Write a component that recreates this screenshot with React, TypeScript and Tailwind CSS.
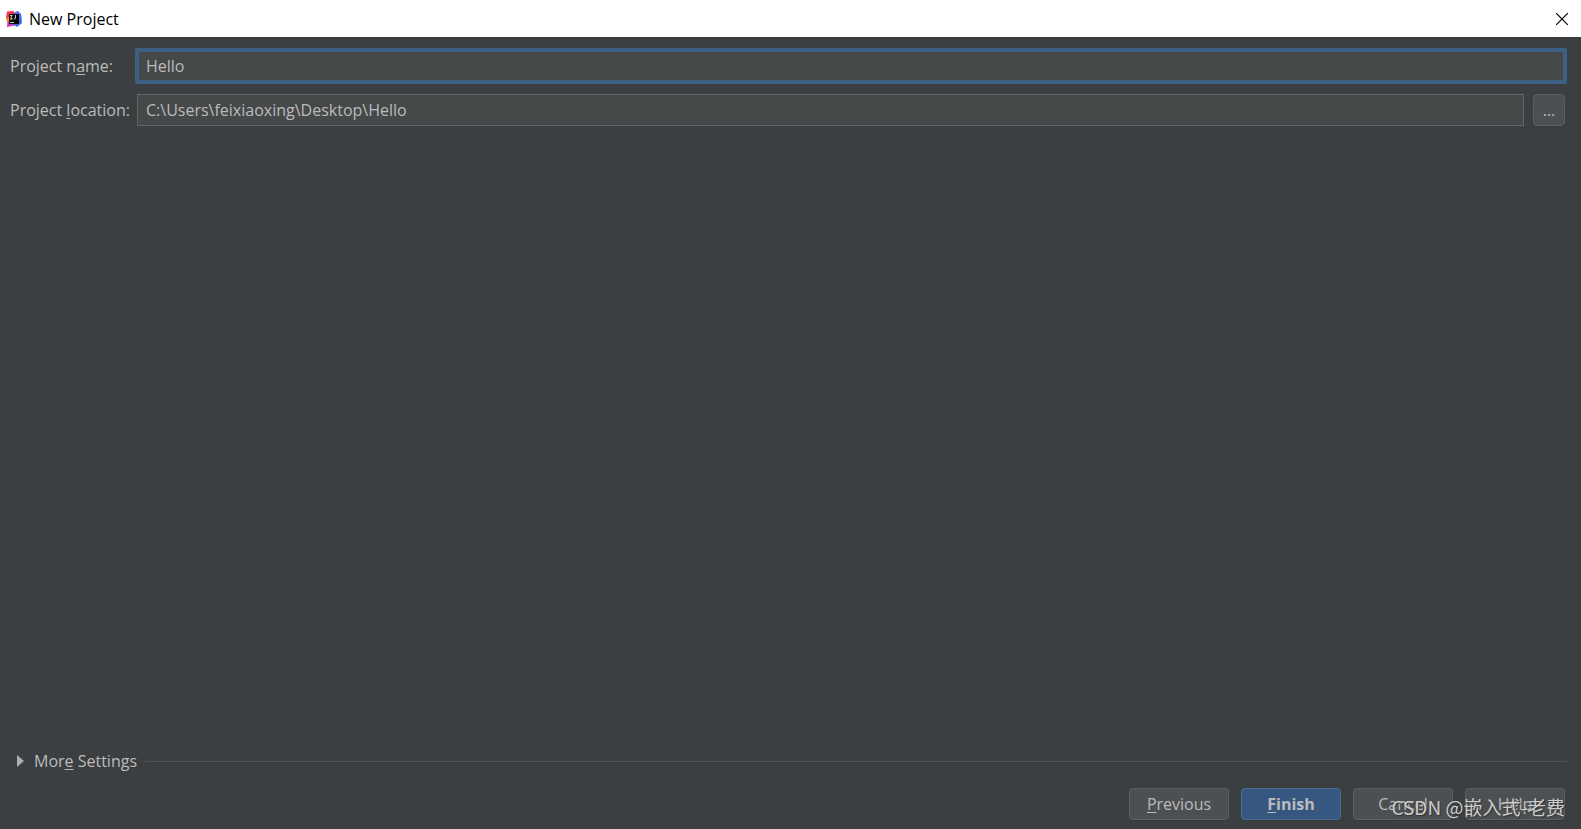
import { useState } from 'react'
import type { ReactNode } from 'react'

function Mnemonic({ children }: { children: ReactNode }) {
  return <span className="underline decoration-1 underline-offset-2">{children}</span>
}

function IdeaLogo() {
  return (
    <svg width="16" height="16" viewBox="0 0 16 16" aria-hidden="true">
      <path d="M1 .5 7.5 0l2 3-4 8L0 7z" fill="#f9304e" />
      <path d="M0 7.5 3.5 5.5V12L1 11z" fill="#fc8b24" />
      <path d="M1.5 10.5H8l1 4-3 .5-5 1z" fill="#c83ab8" />
      <path d="M8 2 11.5 0 15 3l1 9-5 4-4-3z" fill="#3f66e8" />
      <path d="M11.5 0 15 3l.5 5-2-4H8z" fill="#5a6be6" />
      <rect x="3" y="3" width="10" height="10" fill="#0a0a0a" />
      <path d="M4 4.5h2.5M5.3 4.5V8M4 8h2.5M9.5 4v3q0 1-1.7 1" stroke="#ccc" strokeWidth="1" fill="none" />
      <path d="M4 11.5h4" stroke="#ccc" strokeWidth="1" />
    </svg>
  )
}

function TitleBar() {
  return (
    <header className="flex h-[37px] items-center bg-white pl-1.5 pr-[11px] text-black">
      <IdeaLogo />
      <h1 className="ml-[7px] flex-1 text-base">New Project</h1>
      <button type="button" aria-label="Close" className="flex h-6 w-4 items-center justify-center">
        <svg width="12" height="12" viewBox="0 0 12 12" aria-hidden="true">
          <path d="M0 0 12 12M12 0 0 12" stroke="#000" strokeWidth="1.2" />
        </svg>
      </button>
    </header>
  )
}

function DialogButton({ children, primary = false }: { children: ReactNode; primary?: boolean }) {
  return (
    <button
      type="button"
      className={
        primary
          ? 'h-8 w-[100px] rounded border border-[#4c708c] bg-[#365880] font-bold shadow-[0_1px_0_#36393a]'
          : 'h-8 w-[100px] rounded border border-[#5e6060] bg-[#4c5052] shadow-[0_1px_0_#36393a]'
      }
    >
      {children}
    </button>
  )
}

export default function App() {
  const [name, setName] = useState('Hello')
  const [location, setLocation] = useState('C:\\Users\\feixiaoxing\\Desktop\\Hello')

  return (
    <div className="relative flex min-h-screen flex-col bg-[#3c3f41] font-['Open_Sans','Noto_Sans_CJK_SC',sans-serif] text-base leading-6 text-[#bbbbbb]">
      <TitleBar />

      <main className="flex flex-1 flex-col pl-2.5 pr-4 pt-[11px]">
        <div className="grid grid-cols-[127px_1fr] items-center gap-y-[10px]">
          <label htmlFor="project-name">
            Project n<Mnemonic>a</Mnemonic>me:
          </label>
          <div className="-ml-0.5 -mr-0.5 flex">
            <input
              id="project-name"
              type="text"
              value={name}
              onChange={(e) => setName(e.target.value)}
              className="h-9 w-full rounded-xs border-4 border-[#3d6185] bg-[#45494a] px-[7px] outline-none"
            />
          </div>

          <label htmlFor="project-location">
            Project <Mnemonic>l</Mnemonic>ocation:
          </label>
          <div className="flex gap-[9px]">
            <input
              id="project-location"
              type="text"
              value={location}
              onChange={(e) => setLocation(e.target.value)}
              className="h-8 flex-1 border border-[#646464] bg-[#45494a] px-2 outline-none"
            />
            <button
              type="button"
              aria-label="Browse"
              className="h-8 w-8 rounded border border-[#5e6060] bg-[#4c5052] shadow-[0_1px_0_#36393a]"
            >
              ...
            </button>
          </div>
        </div>

        <div className="mt-auto flex items-center">
          <button type="button" aria-expanded="false" className="flex items-center pl-[7px]">
            <svg width="7" height="12" viewBox="0 0 7 12" className="mr-2.5" aria-hidden="true">
              <path d="M0 0 7 6 0 12z" fill="#adadad" />
            </svg>
            <span>
              Mor<Mnemonic>e</Mnemonic> Settings
            </span>
          </button>
          <div className="-mr-0.5 ml-2 h-px flex-1 bg-[#515151]" />
        </div>

        <footer className="flex justify-end gap-3 pb-[9px] pt-[15px]">
          <DialogButton>
            <Mnemonic>P</Mnemonic>revious
          </DialogButton>
          <DialogButton primary>
            <Mnemonic>F</Mnemonic>inish
          </DialogButton>
          <DialogButton>Cancel</DialogButton>
          <DialogButton>Help</DialogButton>
        </footer>
      </main>

      {/* Watermark, drawn over the buttons */}
      <div className="pointer-events-none absolute bottom-2.5 right-4 font-['Noto_Sans_CJK_SC',sans-serif] text-[19px] leading-6 text-[#cccccc] [text-shadow:1px_1px_1px_#333333]">
        CSDN @嵌入式-老费
      </div>
    </div>
  )
}
